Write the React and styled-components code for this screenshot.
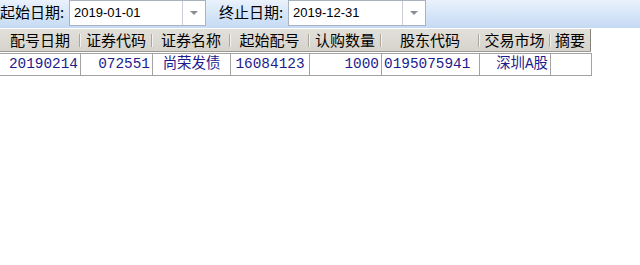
import React from "react";
import styled, { createGlobalStyle } from "styled-components";

const GlobalStyle = createGlobalStyle`
  html, body {
    margin: 0;
    padding: 0;
    background: #ffffff;
  }
  body {
    font-family: "Noto Sans CJK SC", sans-serif;
    overflow: hidden;
  }
`;

const columns = [
  { title: "配号日期", width: 80, align: "right" },
  { title: "证券代码", width: 72, align: "right" },
  { title: "证券名称", width: 78, align: "center" },
  { title: "起始配号", width: 79, align: "center" },
  { title: "认购数量", width: 72, align: "right" },
  { title: "股东代码", width: 98, align: "left" },
  { title: "交易市场", width: 71, align: "right" },
  { title: "摘要", width: 41, align: "left" },
];

const rows = [
  ["20190214", "072551", "尚荣发债", "16084123", "1000", "0195075941", "深圳A股", ""],
];

const gridCols = columns.map((c) => c.width + "px").join(" ");

const App = () => {
  return (
    <Page>
      <GlobalStyle />
      <Toolbar>
        <Label>起始日期:</Label>
        <Combo $width={137}>
          <ComboText>2019-01-01</ComboText>
          <ComboButton>
            <Arrow />
          </ComboButton>
        </Combo>
        <Label $gap>终止日期:</Label>
        <Combo $width={138}>
          <ComboText>2019-12-31</ComboText>
          <ComboButton>
            <Arrow />
          </ComboButton>
        </Combo>
      </Toolbar>
      <HeaderBar>
        <HeaderRow>
          {columns.map((c, i) => (
            <HeaderCell key={c.title} $first={i === 0} $last={i === columns.length - 1}>
              {c.title}
            </HeaderCell>
          ))}
        </HeaderRow>
      </HeaderBar>
      <Body>
        {rows.map((r, ri) => (
          <DataRow key={ri}>
            {r.map((v, i) => (
              <DataCell key={i} $align={columns[i].align} $first={i === 0}>
                {v}
              </DataCell>
            ))}
          </DataRow>
        ))}
      </Body>
    </Page>
  );
};

const Page = styled.div`
  width: 640px;
  height: 265px;
  background: #ffffff;
  display: flex;
  flex-direction: column;
`;

const Toolbar = styled.div`
  height: 28px;
  display: flex;
  align-items: flex-start;
  background: linear-gradient(to bottom, #eaf2fc 0%, #d6e6f8 50%, #c5daf3 100%);
  border-bottom: 1px solid #ffffff;
`;

const Label = styled.div`
  font-size: 15px;
  line-height: 24px;
  color: #000;
  margin-left: ${(p) => (p.$gap ? "13px" : "0")};
  padding-right: 3px;
  width: 66px;
  white-space: nowrap;
`;

const Combo = styled.div`
  width: ${(p) => p.$width}px;
  height: 26px;
  box-sizing: border-box;
  background: #ffffff;
  border: 1px solid #a9b3bf;
  display: flex;
  align-items: stretch;
`;

const ComboText = styled.div`
  flex: 1;
  font-family: "Liberation Sans", "DejaVu Sans", sans-serif;
  font-size: 13px;
  line-height: 23px;
  padding-left: 4px;
  color: #000;
`;

const ComboButton = styled.div`
  width: 22px;
  border-left: 1px solid #c9ced6;
  display: flex;
  align-items: center;
  justify-content: center;
  background: #ffffff;
`;

const Arrow = styled.div`
  width: 0;
  height: 0;
  border-left: 4px solid transparent;
  border-right: 4px solid transparent;
  border-top: 4px solid #8a8f96;
`;

const HeaderBar = styled.div`
  height: 23px;
  display: flex;
`;

const HeaderRow = styled.div`
  display: grid;
  grid-template-columns: ${gridCols};
  background: linear-gradient(to bottom, #e2e0da 0%, #d6d3cc 100%);
  border-bottom: 1px solid #9d9a92;
`;

const HeaderCell = styled.div`
  position: relative;
  font-size: 15px;
  line-height: 22px;
  text-align: center;
  color: #000;
  white-space: nowrap;
  box-sizing: border-box;
  border-right: ${(p) => (p.$last ? "1px solid #85827b" : "none")};
  &::before {
    content: "";
    display: ${(p) => (p.$first ? "none" : "block")};
    position: absolute;
    left: -1px;
    top: 5px;
    height: 13px;
    width: 1px;
    background: #aaa7a0;
    box-shadow: 1px 0 0 #f2f1ee;
  }
`;

const Body = styled.div`
  flex: 1;
  padding-top: 1px;
  background: #ffffff;
`;

const DataRow = styled.div`
  display: grid;
  grid-template-columns: ${gridCols};
  height: 23px;
  box-sizing: border-box;
  border-top: 1px solid #a3a3a3;
  border-bottom: 1px solid #a3a3a3;
  width: 592px;
  border-right: 1px solid #a3a3a3;
`;

const DataCell = styled.div`
  font-family: "Liberation Mono", "Noto Sans CJK SC", monospace;
  font-size: 14.4px;
  line-height: 21px;
  color: #1c1c8e;
  text-align: ${(p) => p.$align};
  padding: 0 2px;
  box-sizing: border-box;
  border-left: ${(p) => (p.$first ? "none" : "1px solid #a3a3a3")};
  white-space: nowrap;
  overflow: hidden;
`;

export default App;
